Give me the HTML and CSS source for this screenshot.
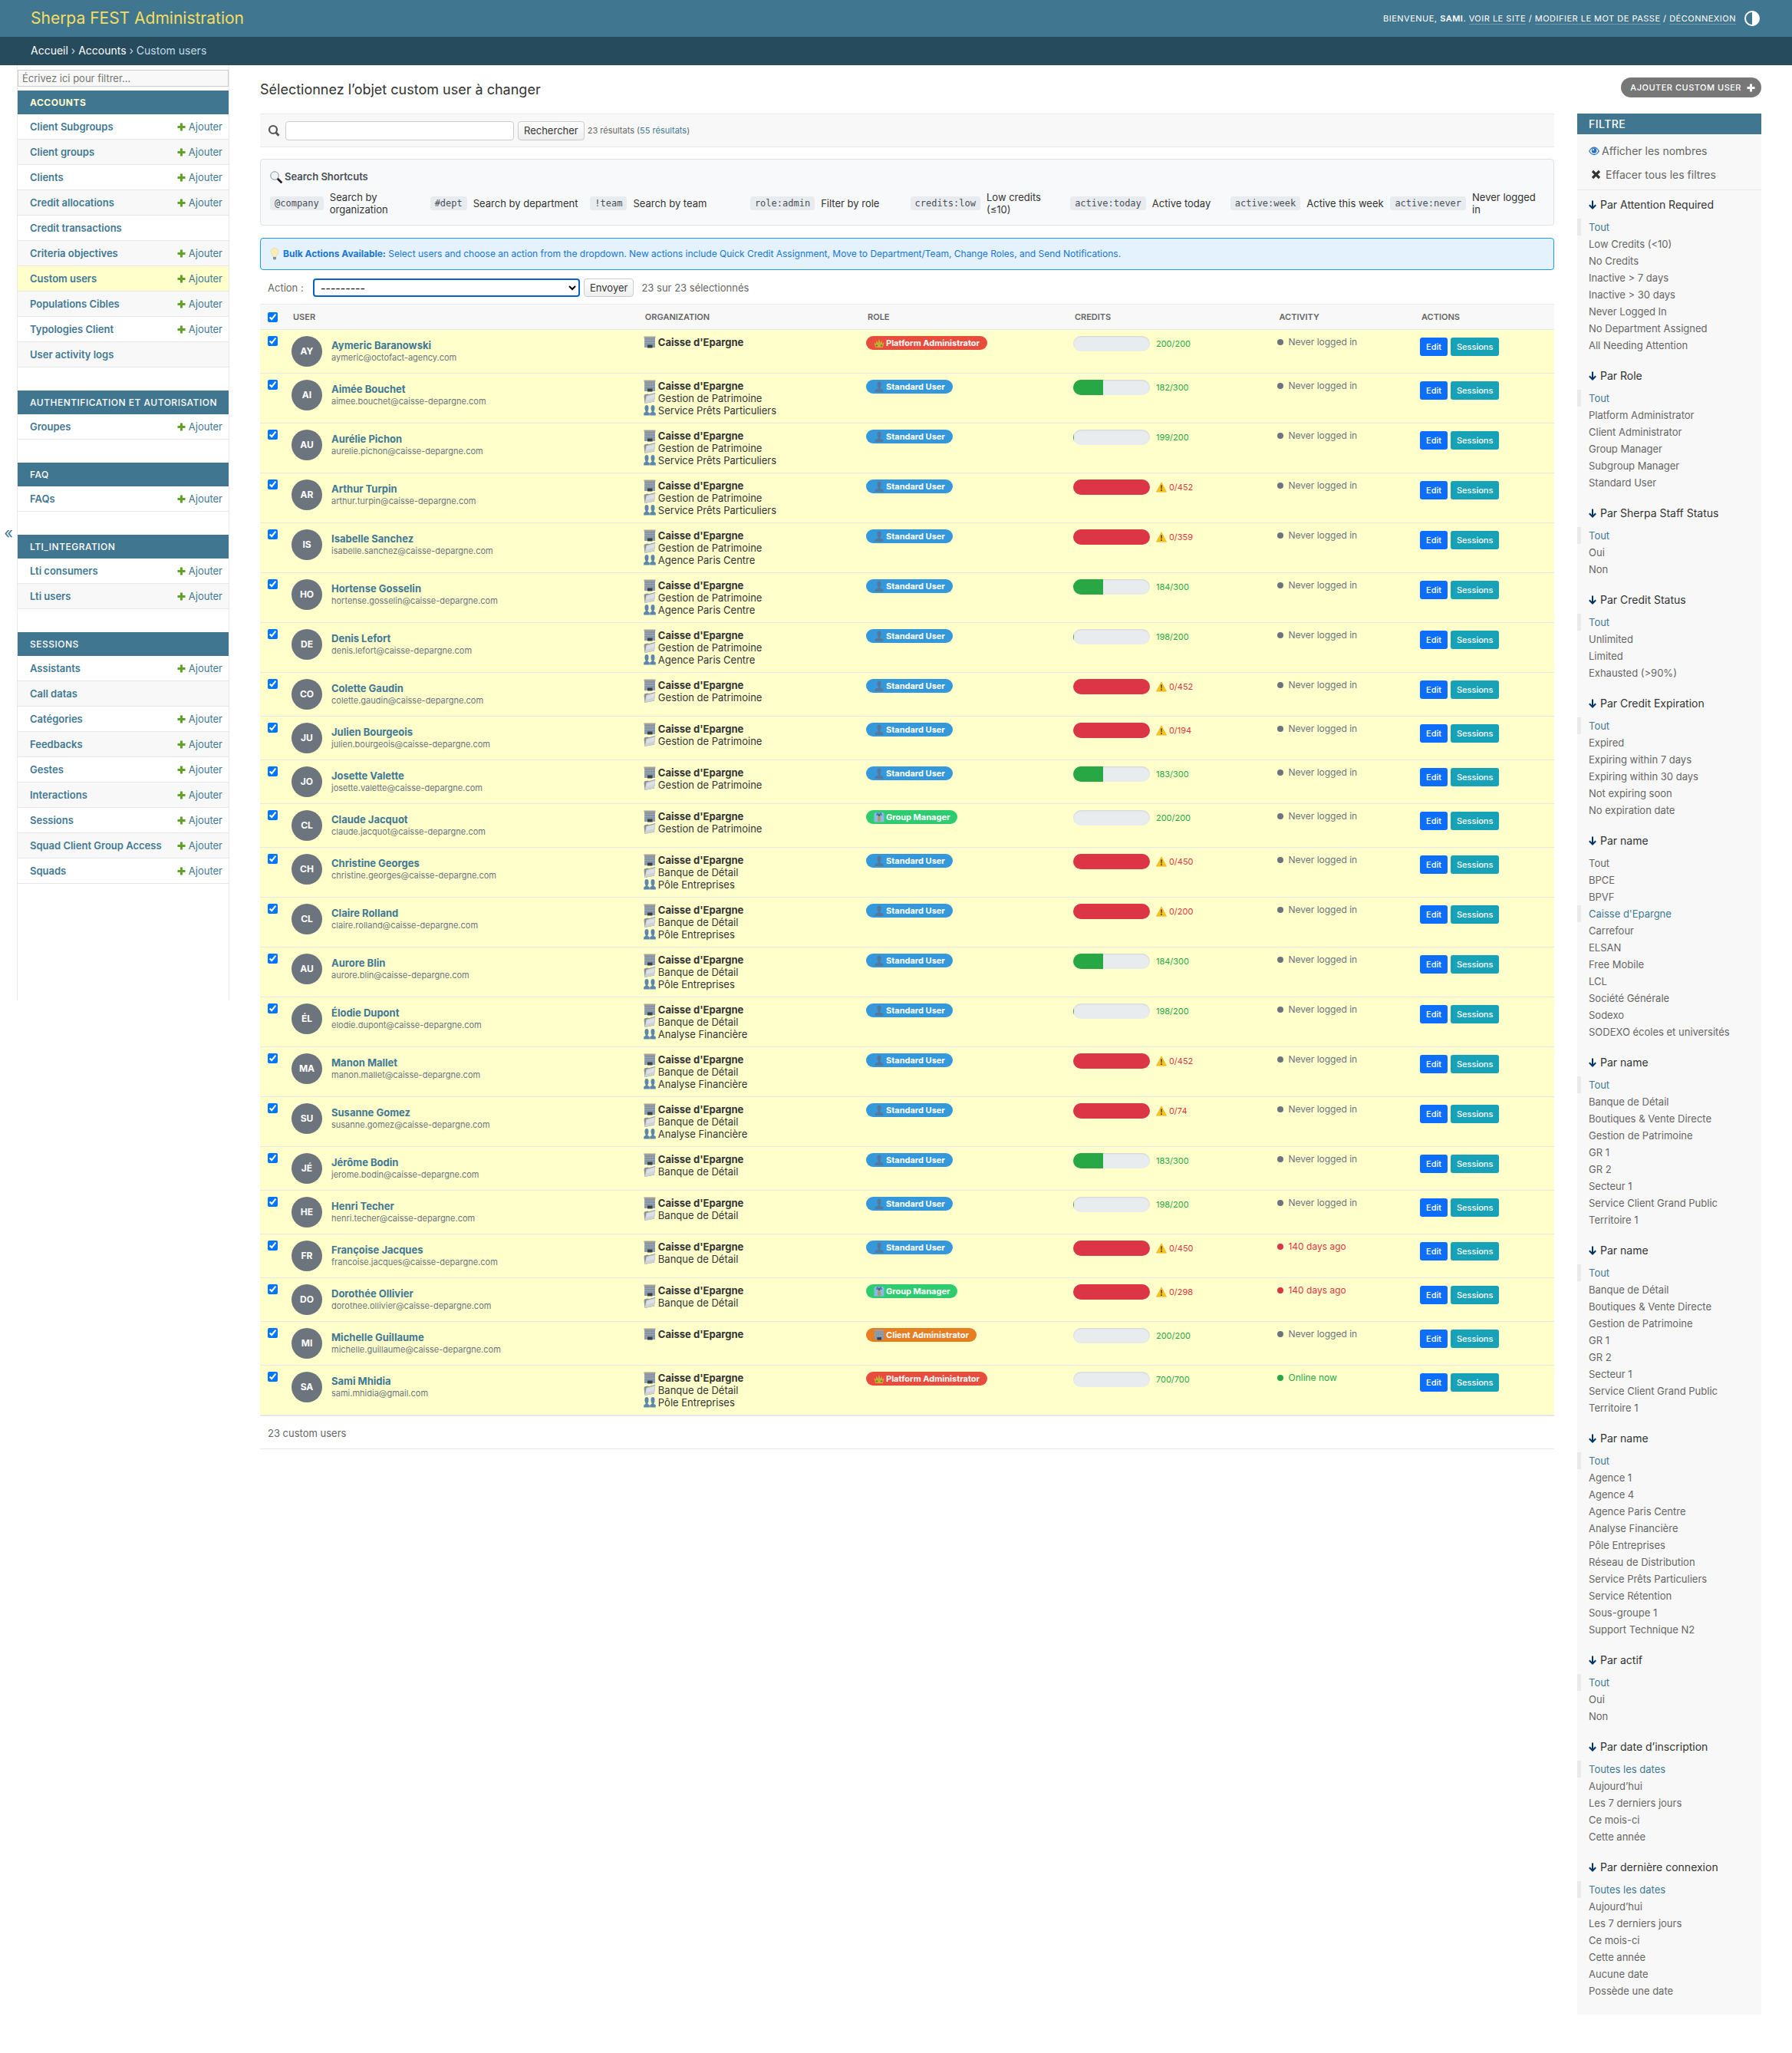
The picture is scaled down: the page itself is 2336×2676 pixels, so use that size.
FILE: index.html
```
<!DOCTYPE html>
<html lang="fr">
<head>
    <meta charset="UTF-8">
    <meta name="viewport" content="width=device-width, initial-scale=1.0">
    <title>Sélectionnez l’objet custom user à changer | Sherpa FEST Administration</title>
    <link rel="stylesheet" href="styles.css">
</head>
<body>
    <!-- Shared icons -->
    <svg class="sprite" width="0" height="0">
        <symbol id="i-plus" viewBox="0 0 13 13"><path d="M5 1.500h3V5h3.500v3H8v3.500H5V8H1.500V5H5z" fill="currentColor"/></symbol>
        <symbol id="i-down" viewBox="0 0 10 12"><path d="M5 0.500V10.500M0.800 6.300L5 10.500L9.200 6.300" fill="none" stroke="#036" stroke-width="2"/></symbol>
        <symbol id="i-building" viewBox="0 0 16 16">
            <path d="M1 1h14v14H1z" fill="#8d9ba8"/><path d="M0.500 0.500h15v2H0.500z" fill="#a89f98"/>
            <path d="M4 3.500v7M7 3.500v7M10 3.500v7M13 3.500v7" stroke="#7a8b9c" stroke-width="1.200"/>
            <path d="M1 5.500h14M1 8.500h14" stroke="#9eacb8" stroke-width="0.800"/>
            <path d="M5 11.500h6.500V15.500H5z" fill="#34424f"/>
        </symbol>
        <symbol id="i-folder" viewBox="0 0 16 16">
            <path d="M0.500 5L1.500 3.200L5.500 2.500L6.500 3.200L15 1L14 12.500L1.500 15z" fill="#8b9296"/>
            <path d="M3.500 5L15.500 1.800L13.800 12.200L1.500 15z" fill="#cfd3d6"/>
            <path d="M4.500 5.800L14.500 3L13.500 8L3.500 11z" fill="#dde0e2"/>
        </symbol>
        <symbol id="i-people" viewBox="0 0 16 16">
            <path d="M4 1C1.600 1 1.200 4 1.600 6.500C1.900 8 2.500 8.500 2.700 9.800L0.200 11.500V14.500H7.800V11.500L5.300 9.800C5.500 8.500 6.100 8 6.400 6.500C6.800 4 6.400 1 4 1z" fill="#5c87ab"/>
            <path d="M12 1C9.600 1 9.200 4 9.600 6.500C9.900 8 10.500 8.500 10.700 9.800L8.200 11.500V14.500H15.800V11.500L13.300 9.800C13.500 8.500 14.100 8 14.400 6.500C14.800 4 14.400 1 12 1z" fill="#5c87ab"/>
        </symbol>
        <symbol id="i-user" viewBox="0 0 14 14">
            <path d="M7 0.500C4.300 0.500 4 4 4.800 6.500L5.800 8.500V9.500L1.500 11.500V14H12.500V11.500L8.200 9.500V8.500L9.200 6.500C10 4 9.700 0.500 7 0.500z" fill="#56789a"/>
        </symbol>
        <symbol id="i-crown" viewBox="0 0 14 14">
            <path d="M0.500 6L3 8L3.500 3.500L5.500 7L7 1.500L8.500 7L10.500 3.500L11 8L13.500 6L12 13H2z" fill="#d9a62a"/>
            <path d="M7 4L8.500 8L7 11L5.500 8z" fill="#8fc13f"/><circle cx="3.800" cy="10.500" r="1.300" fill="#4f8a55"/><circle cx="10.200" cy="10.500" r="1.300" fill="#4f8a55"/>
        </symbol>
        <symbol id="i-tie" viewBox="0 0 14 14">
            <path d="M0.500 2L4.500 0.500L7 2L9.500 0.500L13.500 2V13.500H0.500z" fill="#8ab9e6"/>
            <path d="M4.500 0.500L7 3L9.500 0.500L11 4.500L8.800 5.500L7 3L5.200 5.500L3 4.500z" fill="#4a7fb5"/>
            <path d="M6 3h2l1.200 8.500L7 13.500L4.800 11.500z" fill="#a89a6a"/>
            <path d="M6.300 3h1.400v3H6.300z" fill="#33475c"/>
        </symbol>
        <symbol id="i-warn" viewBox="0 0 14 14">
            <path d="M7 0.800L13.600 13.200H0.400z" fill="#fcc21b" stroke="#e0a800" stroke-width="0.500" stroke-linejoin="round"/>
            <path d="M6.200 4.500h1.600L7.500 9.500h-1z" fill="#2b2b2b"/><circle cx="7" cy="11.200" r="0.900" fill="#2b2b2b"/>
        </symbol>
    </svg>

    <header class="header">
        <a class="branding" href="#">Sherpa FEST Administration</a>
        <div class="user-tools">
            <span>Bienvenue, <strong>Sami</strong>. <a href="#">Voir le site</a> / <a href="#">Modifier le mot de passe</a> / <a href="#">Déconnexion</a></span>
            <button class="theme-toggle" type="button" aria-label="Changer de thème">
                <svg width="20" height="20" viewBox="0 0 20 20"><circle cx="10" cy="10" r="9" fill="none" stroke="#fff" stroke-width="2"/><path d="M10 1a9 9 0 0 1 0 18z" fill="#fff"/></svg>
            </button>
        </div>
    </header>
    <nav class="breadcrumbs"><a href="#">Accueil</a> › <a href="#">Accounts</a> › Custom users</nav>

    <div class="main">
        <div class="nav-wrap">
            <button class="toggle-nav" type="button" aria-label="Masquer la navigation">«</button>
            <nav class="sidebar" id="sidebar">
                <input class="nav-filter" type="search" placeholder="Écrivez ici pour filtrer…" aria-label="Filtrer la navigation">
            </nav>
        </div>

        <main class="content">
            <div class="title-row">
                <h1>Sélectionnez l’objet custom user à changer</h1>
                <a class="add-link" href="#">Ajouter custom user <svg width="13" height="13"><use href="#i-plus"/></svg></a>
            </div>

            <div class="changelist">
                <div class="results">
                    <form class="toolbar">
                        <label for="searchbar" aria-label="Rechercher"><svg width="16" height="16" viewBox="0 0 16 16"><circle cx="7" cy="7" r="5" fill="none" stroke="#555" stroke-width="2.200"/><path d="M10.500 10.500L14.500 14.800" stroke="#555" stroke-width="2.800"/></svg></label>
                        <input id="searchbar" type="text">
                        <button class="btn" type="button">Rechercher</button>
                        <span class="small">23 résultats (<a href="#">55 résultats</a>)</span>
                    </form>

                    <section class="shortcuts">
                        <h2><svg width="16" height="16" viewBox="0 0 16 16"><path d="M10 10L14.500 14.500" stroke="#222" stroke-width="2.800" stroke-linecap="round"/><circle cx="6" cy="6" r="5.300" fill="#eef3f5" stroke="#8b9296"/></svg> Search Shortcuts</h2>
                        <div class="shortcut-grid">
                            <div><code>@company</code><span>Search by organization</span></div>
                            <div><code>#dept</code><span>Search by department</span></div>
                            <div><code>!team</code><span>Search by team</span></div>
                            <div><code>role:admin</code><span>Filter by role</span></div>
                            <div><code>credits:low</code><span>Low credits (≤10)</span></div>
                            <div><code>active:today</code><span>Active today</span></div>
                            <div><code>active:week</code><span>Active this week</span></div>
                            <div><code>active:never</code><span>Never logged in</span></div>
                        </div>
                    </section>

                    <div class="bulk-info">
                        <svg width="12" height="16" viewBox="0 0 12 16"><path d="M6 0.500C2.500 0.500 1 3 1 5.300C1 8 3.500 9 3.800 11.500H8.200C8.500 9 11 8 11 5.300C11 3 9.500 0.500 6 0.500z" fill="#fbeeb4" stroke="#e0d3a0" stroke-width="0.600"/><path d="M4 12h4v2.500L6.800 15.500H5.200L4 14.500z" fill="#8c9094"/></svg>
                        <span><strong>Bulk Actions Available:</strong> Select users and choose an action from the dropdown. New actions include Quick Credit Assignment, Move to Department/Team, Change Roles, and Send Notifications.</span>
                    </div>

                    <div class="actions">
                        <label for="action">Action :</label>
                        <select id="action"><option>---------</option></select>
                        <button class="btn" type="button">Envoyer</button>
                        <span class="counter">23 sur 23 sélectionnés</span>
                    </div>

                    <table class="result-list">
                        <thead>
                            <tr>
                                <th class="col-check"><input type="checkbox" checked aria-label="Tout sélectionner"></th>
                                <th class="col-user">User</th>
                                <th class="col-org">Organization</th>
                                <th class="col-role">Role</th>
                                <th class="col-credits">Credits</th>
                                <th class="col-activity">Activity</th>
                                <th class="col-actions">Actions</th>
                            </tr>
                        </thead>
                        <tbody id="users"></tbody>
                    </table>
                    <p class="paginator">23 custom users</p>
                </div>

                <aside class="filter" id="filter">
                    <h2>Filtre</h2>
                    <div class="filter-extra">
                        <a href="#"><svg width="14" height="12" viewBox="0 0 14 12"><path d="M0.700 6C3 2 5.500 1.200 7 1.200S11 2 13.300 6C11 10 8.500 10.500 7 10.500S3 10 0.700 6z" fill="#fff" stroke="#2b70bf" stroke-width="1.300"/><circle cx="7" cy="5.400" r="3.300" fill="#2b70bf"/><circle cx="6" cy="4.200" r="1" fill="#fff"/></svg> Afficher les nombres</a>
                        <a class="clear" href="#"><svg width="13" height="13" viewBox="0 0 13 13"><path d="M2 2L11 11M11 2L2 11" stroke="#333" stroke-width="3.200"/></svg> Effacer tous les filtres</a>
                    </div>
                </aside>
            </div>
        </main>
    </div>
    <script src="script.js"></script>
</body>
</html>
```

FILE: styles.css
```
* {
    box-sizing: border-box;
}
body {
    margin: 0;
    background: #fff;
    color: #333;
    font-family: Inter, Roboto, "Liberation Sans", sans-serif;
    font-size: 13px;
    line-height: 20px;
}
a {
    color: #417893;
    text-decoration: none;
}
button, input, select {
    font-family: inherit;
}
svg {
    flex: none;
}
.sprite {
    position: absolute;
}

/* Header */
.header {
    display: flex;
    justify-content: space-between;
    align-items: center;
    height: 48px;
    padding: 0 42px 0 40px;
    background: #417690;
    color: #fff;
}
.branding {
    color: #f5dd5d;
    font-size: 21px;
    font-weight: 400;
}
.user-tools {
    display: flex;
    align-items: center;
    gap: 11px;
    font-size: 11px;
    line-height: 14px;
    letter-spacing: 0.5px;
    text-transform: uppercase;
}
.user-tools strong {
    font-weight: 600;
}
.user-tools a {
    color: #fff;
    border-bottom: 1px solid rgba(255, 255, 255, 0.25);
}
.theme-toggle {
    display: flex;
    padding: 0;
    border: 0;
    background: none;
}
.breadcrumbs {
    padding: 8px 40px 9px;
    background: #264b5d;
    color: #c4dce8;
    font-size: 14px;
}
.breadcrumbs a {
    color: #fff;
}

/* Sidebar */
.main {
    display: flex;
    align-items: flex-start;
}
.nav-wrap {
    display: flex;
    flex: none;
}
.toggle-nav {
    width: 23px;
    padding: 0;
    border: 0;
    border-right: 1px solid #eaeaea;
    background: #fff;
    color: #417893;
    font-size: 20px;
}
.sidebar {
    width: 276px;
    padding: 6px 0 152px;
    border-right: 1px solid #eaeaea;
}
.nav-filter {
    display: block;
    width: 100%;
    height: 22px;
    margin-bottom: 5px;
    padding: 0 5px;
    border: 1px solid #ccc;
    background: #f8f8f8;
    font-size: 13px;
}
.nav-filter::placeholder {
    color: #757575;
}
.module + .module {
    margin-top: 30px;
}
.module h2 {
    margin: 0;
    padding: 8px 8px 7px 16px;
    background: #417690;
    color: #fff;
    font-size: 12px;
    line-height: 16px;
    font-weight: 500;
    letter-spacing: 0.5px;
    text-transform: uppercase;
}
.module.current h2 {
    color: #ffc;
    font-weight: 700;
}
.module ul, .filter ul {
    margin: 0;
    padding: 0;
    list-style: none;
}
.module li {
    display: flex;
    justify-content: space-between;
    padding: 6px 8px 6px 16px;
    border-bottom: 1px solid #e8e8e8;
    font-weight: 600;
}
.module li:nth-child(even) {
    background: #f8f8f8;
}
.module li.selected {
    background: #ffc;
}
.module .add {
    display: flex;
    align-items: center;
    gap: 3px;
    font-weight: 400;
}
.module .add svg {
    color: #5fa225;
}

/* Content */
.content {
    flex: 1;
    min-width: 0;
    padding: 16px 40px 50px;
}
.title-row {
    display: flex;
    justify-content: space-between;
    margin-bottom: 15px;
}
h1 {
    margin: 0;
    font-size: 18px;
    line-height: 32px;
    font-weight: 400;
}
.add-link {
    display: flex;
    align-items: center;
    gap: 6px;
    height: 26px;
    padding: 0 7px 0 12px;
    border-radius: 15px;
    background: #777;
    color: #fff;
    font-size: 11px;
    font-weight: 500;
    letter-spacing: 0.5px;
    text-transform: uppercase;
}
.changelist {
    display: flex;
    align-items: flex-start;
    gap: 30px;
}
.results {
    flex: 1;
    min-width: 0;
}
.toolbar {
    display: flex;
    align-items: center;
    height: 44px;
    margin-bottom: 15px;
    padding: 0 10px;
    border-top: 1px solid #eaeaea;
    border-bottom: 1px solid #eaeaea;
    background: #f8f8f8;
}
.toolbar label {
    display: flex;
    margin-right: 7px;
}
#searchbar {
    width: 298px;
    height: 25px;
    margin-right: 5px;
    border: 1px solid #ccc;
    border-radius: 4px;
}
.btn {
    height: 25px;
    padding: 0 7px;
    border: 1px solid #ccc;
    border-radius: 4px;
    background: linear-gradient(#fff, #eee);
    color: #333;
    font-size: 13px;
}
.small {
    margin-left: 4px;
    color: #666;
    font-size: 11px;
}
.shortcuts {
    margin-bottom: 16px;
    padding: 12px;
    border: 1px solid #dee2e6;
    border-radius: 4px;
    background: #f8f9fa;
    line-height: 16px;
}
.shortcuts h2 {
    display: flex;
    align-items: center;
    gap: 3px;
    margin: 0 0 8px;
    color: #495057;
    font-size: 13px;
    line-height: 21px;
    font-weight: 600;
}
.shortcut-grid {
    display: grid;
    grid-template-columns: repeat(auto-fit, minmax(200px, 1fr));
    gap: 8px;
}
.shortcut-grid div {
    display: flex;
    align-items: center;
    gap: 8px;
}
code {
    padding: 1px 6px;
    border-radius: 3px;
    background: #e9ecef;
    color: #495057;
    font-family: "DejaVu Sans Mono", monospace;
    font-size: 12px;
}
.bulk-info {
    display: flex;
    align-items: center;
    gap: 5px;
    margin-bottom: 11px;
    padding: 10px 12px;
    border: 1px solid #2196f3;
    border-radius: 4px;
    background: #e3f2fd;
    color: #1976d2;
    font-size: 12px;
}
.actions {
    display: flex;
    align-items: center;
    margin-bottom: 9px;
    padding-left: 10px;
    color: #666;
}
.actions label {
    width: 59px;
}
.actions select {
    width: 348px;
    height: 24px;
    margin-right: 5px;
    padding: 0 4px;
    border: 2px solid #0561cc;
    border-radius: 4px;
    background: #fff;
    font-size: 14px;
}
.actions .btn {
    height: 24px;
}
.counter {
    margin-left: 10px;
}

/* Result table */
.result-list {
    width: 100%;
    border-collapse: collapse;
    table-layout: fixed;
}
.result-list th {
    padding: 6px 10px;
    border-top: 1px solid #eaeaea;
    border-bottom: 1px solid #eaeaea;
    background: #f8f8f8;
    color: #666;
    font-size: 11px;
    font-weight: 600;
    text-align: left;
    text-transform: uppercase;
}
.result-list td {
    padding: 8px;
    border-bottom: 1px solid #e8e8e8;
    background: #ffc;
    font-size: 12px;
    line-height: 16px;
    vertical-align: top;
}
.result-list .col-check {
    width: 33px;
    padding-right: 0;
    padding-left: 10px;
}
.col-user {
    width: 27.2%;
}
.col-org {
    width: 17.2%;
}
.col-role {
    width: 16%;
}
.col-credits {
    width: 15.8%;
}
.col-activity {
    width: 11%;
}
.col-check input {
    display: block;
    width: 13px;
    height: 13px;
    margin: 0;
    accent-color: #0075ff;
}
.user {
    display: flex;
    align-items: center;
    gap: 12px;
}
.avatar {
    width: 40px;
    border-radius: 50%;
    background: #6c757d;
    color: #fff;
    font-weight: 700;
    line-height: 40px;
    text-align: center;
}
.user a {
    display: block;
    font-size: 13px;
    font-weight: 700;
}
.user small {
    display: block;
    color: #6c757d;
    font-size: 11px;
}
.org {
    display: flex;
    align-items: center;
    gap: 3px;
    font-size: 13px;
}
.org:first-child {
    font-weight: 700;
}
.badge {
    display: inline-flex;
    align-items: center;
    gap: 2px;
    height: 18px;
    padding: 0 10px;
    border-radius: 12px;
    color: #fff;
    font-size: 11px;
    font-weight: 700;
    vertical-align: top;
}
.badge.platform {
    background: #e74c3c;
}
.badge.client {
    background: #e67e22;
}
.badge.group {
    background: #2ecc71;
}
.badge.standard {
    background: #3498db;
}
.credits {
    display: flex;
    align-items: center;
    gap: 8px;
    color: #28a745;
    font-size: 11px;
}
.credits.empty {
    color: #dc3545;
}
.credits > span {
    display: flex;
    align-items: center;
    gap: 3px;
}
.bar {
    width: 100px;
    height: 20px;
    overflow: hidden;
    border-radius: 10px;
    background: #e9ecef;
    box-shadow: inset 0 1px 2px rgba(0, 0, 0, 0.1);
}
.bar div {
    height: 100%;
    background: #28a745;
}
.empty .bar div {
    background: #dc3545;
}
.activity {
    display: flex;
    align-items: center;
    gap: 6px;
    color: #6c757d;
}
.activity::before {
    content: "";
    width: 8px;
    height: 8px;
    border-radius: 50%;
    background: currentColor;
}
.activity.late {
    color: #dc3545;
}
.activity.online {
    color: #28a745;
}
.row-actions {
    display: flex;
    gap: 4px;
    padding-top: 2px;
}
.row-actions a {
    padding: 4px 8px;
    border-radius: 3px;
    background: #0d6efd;
    color: #fff;
    font-size: 11px;
    font-weight: 500;
}
.row-actions a + a {
    background: #17a2b8;
}
.paginator {
    margin: 0;
    padding: 12px 10px 10px;
    border-top: 1px solid #e8e8e8;
    border-bottom: 1px solid #eaeaea;
    color: #666;
}

/* Filter column */
.filter {
    flex: 0 0 240px;
    padding-bottom: 10px;
    background: #f8f8f8;
}
.filter h2 {
    margin: 0;
    padding: 4px 15px 3px;
    background: #417690;
    color: #fff;
    font-size: 14px;
    font-weight: 500;
    letter-spacing: 0.5px;
    text-transform: uppercase;
}
.filter-extra {
    padding: 6px 15px 4px;
    border-bottom: 1px solid #eaeaea;
}
.filter a {
    color: #666;
}
.filter-extra a {
    display: flex;
    align-items: center;
    gap: 3px;
    font-size: 14px;
    line-height: 31px;
}
.filter-extra .clear {
    gap: 6px;
    padding-left: 3px;
}
.filter section {
    padding: 10px 0;
}
.filter h3 {
    display: flex;
    align-items: center;
    gap: 5px;
    margin: 0 0 9px;
    padding: 0 15px;
    font-size: 14px;
    line-height: 18px;
    font-weight: 400;
}
.filter li {
    padding-left: 15px;
    line-height: 22px;
}
.filter li.selected {
    padding-left: 10px;
    border-left: 5px solid #eaeaea;
}
.filter li.selected a {
    color: #417893;
}
```

FILE: script.js
```
const icon = (name, size) => `<svg width="${size}" height="${size}"><use href="#i-${name}"/></svg>`;

// A trailing "-" marks a model that cannot be added from the menu
const apps = [
    ['Accounts', ['Client Subgroups', 'Client groups', 'Clients', 'Credit allocations', 'Credit transactions-', 'Criteria objectives', 'Custom users', 'Populations Cibles', 'Typologies Client', 'User activity logs-']],
    ['Authentification et autorisation', ['Groupes']],
    ['FAQ', ['FAQs']],
    ['LTI_Integration', ['Lti consumers', 'Lti users']],
    ['Sessions', ['Assistants', 'Call datas-', 'Catégories', 'Feedbacks', 'Gestes', 'Interactions', 'Sessions', 'Squad Client Group Access', 'Squads']]
];

document.getElementById('sidebar').insertAdjacentHTML('beforeend', apps.map(([app, models], i) => `
    <div class="module${i === 0 ? ' current' : ''}">
        <h2>${app}</h2>
        <ul>${models.map(model => `
            <li${model === 'Custom users' ? ' class="selected"' : ''}>
                <a href="#">${model.replace(/-$/, '')}</a>
                ${model.endsWith('-') ? '' : `<a class="add" href="#">${icon('plus', 13)} Ajouter</a>`}
            </li>`).join('')}
        </ul>
    </div>`).join(''));

const roles = {
    platform: ['crown', 'Platform Administrator'],
    client: ['building', 'Client Administrator'],
    group: ['tie', 'Group Manager'],
    standard: ['user', 'Standard User']
};
const gp = 'Gestion de Patrimoine';
const bd = 'Banque de Détail';
const cd = '@caisse-depargne.com';

// name, email, group, subgroup, role, credits left, credits total, last activity
const users = [
    ['Aymeric Baranowski', 'aymeric@octofact-agency.com', '', '', 'platform', 200, 200],
    ['Aimée Bouchet', 'aimee.bouchet' + cd, gp, 'Service Prêts Particuliers', 'standard', 182, 300],
    ['Aurélie Pichon', 'aurelie.pichon' + cd, gp, 'Service Prêts Particuliers', 'standard', 199, 200],
    ['Arthur Turpin', 'arthur.turpin' + cd, gp, 'Service Prêts Particuliers', 'standard', 0, 452],
    ['Isabelle Sanchez', 'isabelle.sanchez' + cd, gp, 'Agence Paris Centre', 'standard', 0, 359],
    ['Hortense Gosselin', 'hortense.gosselin' + cd, gp, 'Agence Paris Centre', 'standard', 184, 300],
    ['Denis Lefort', 'denis.lefort' + cd, gp, 'Agence Paris Centre', 'standard', 198, 200],
    ['Colette Gaudin', 'colette.gaudin' + cd, gp, '', 'standard', 0, 452],
    ['Julien Bourgeois', 'julien.bourgeois' + cd, gp, '', 'standard', 0, 194],
    ['Josette Valette', 'josette.valette' + cd, gp, '', 'standard', 183, 300],
    ['Claude Jacquot', 'claude.jacquot' + cd, gp, '', 'group', 200, 200],
    ['Christine Georges', 'christine.georges' + cd, bd, 'Pôle Entreprises', 'standard', 0, 450],
    ['Claire Rolland', 'claire.rolland' + cd, bd, 'Pôle Entreprises', 'standard', 0, 200],
    ['Aurore Blin', 'aurore.blin' + cd, bd, 'Pôle Entreprises', 'standard', 184, 300],
    ['Élodie Dupont', 'elodie.dupont' + cd, bd, 'Analyse Financière', 'standard', 198, 200],
    ['Manon Mallet', 'manon.mallet' + cd, bd, 'Analyse Financière', 'standard', 0, 452],
    ['Susanne Gomez', 'susanne.gomez' + cd, bd, 'Analyse Financière', 'standard', 0, 74],
    ['Jérôme Bodin', 'jerome.bodin' + cd, bd, '', 'standard', 183, 300],
    ['Henri Techer', 'henri.techer' + cd, bd, '', 'standard', 198, 200],
    ['Françoise Jacques', 'francoise.jacques' + cd, bd, '', 'standard', 0, 450, '140 days ago'],
    ['Dorothée Ollivier', 'dorothee.ollivier' + cd, bd, '', 'group', 0, 298, '140 days ago'],
    ['Michelle Guillaume', 'michelle.guillaume' + cd, '', '', 'client', 200, 200],
    ['Sami Mhidia', 'sami.mhidia@gmail.com', bd, 'Pôle Entreprises', 'platform', 700, 700, 'Online now']
];

document.getElementById('users').innerHTML = users.map(([name, email, group, subgroup, role, left, total, last = 'Never logged in']) => {
    const state = last.endsWith('ago') ? 'late' : last === 'Online now' ? 'online' : '';
    return `
    <tr>
        <td class="col-check"><input type="checkbox" checked aria-label="${name}"></td>
        <td><div class="user"><span class="avatar">${name.slice(0, 2).toUpperCase()}</span><div><a href="#">${name}</a><small>${email}</small></div></div></td>
        <td>
            <div class="org">${icon('building', 16)}Caisse d'Epargne</div>
            ${group && `<div class="org">${icon('folder', 16)}${group}</div>`}
            ${subgroup && `<div class="org">${icon('people', 16)}${subgroup}</div>`}
        </td>
        <td><span class="badge ${role}">${icon(roles[role][0], 14)}${roles[role][1]}</span></td>
        <td><div class="credits${left ? '' : ' empty'}"><div class="bar"><div style="width: ${Math.round((1 - left / total) * 100)}%"></div></div><span>${left ? '' : icon('warn', 14)}${left}/${total}</span></div></td>
        <td><div class="activity ${state}">${last}</div></td>
        <td><div class="row-actions"><a href="#">Edit</a><a href="#">Sessions</a></div></td>
    </tr>`;
}).join('');

const groups = ['Tout', bd, 'Boutiques & Vente Directe', gp, 'GR 1', 'GR 2', 'Secteur 1', 'Service Client Grand Public', 'Territoire 1'];
const dates = ['Toutes les dates', 'Aujourd’hui', 'Les 7 derniers jours', 'Ce mois-ci', 'Cette année'];

// title, choices, selected index
const filters = [
    ['Attention Required', ['Tout', 'Low Credits (<10)', 'No Credits', 'Inactive > 7 days', 'Inactive > 30 days', 'Never Logged In', 'No Department Assigned', 'All Needing Attention']],
    ['Role', ['Tout', 'Platform Administrator', 'Client Administrator', 'Group Manager', 'Subgroup Manager', 'Standard User']],
    ['Sherpa Staff Status', ['Tout', 'Oui', 'Non']],
    ['Credit Status', ['Tout', 'Unlimited', 'Limited', 'Exhausted (>90%)']],
    ['Credit Expiration', ['Tout', 'Expired', 'Expiring within 7 days', 'Expiring within 30 days', 'Not expiring soon', 'No expiration date']],
    ['name', ['Tout', 'BPCE', 'BPVF', "Caisse d'Epargne", 'Carrefour', 'ELSAN', 'Free Mobile', 'LCL', 'Société Générale', 'Sodexo', 'SODEXO écoles et universités'], 3],
    ['name', groups],
    ['name', groups],
    ['name', ['Tout', 'Agence 1', 'Agence 4', 'Agence Paris Centre', 'Analyse Financière', 'Pôle Entreprises', 'Réseau de Distribution', 'Service Prêts Particuliers', 'Service Rétention', 'Sous-groupe 1', 'Support Technique N2']],
    ['actif', ['Tout', 'Oui', 'Non']],
    ['date d’inscription', dates],
    ['dernière connexion', [...dates, 'Aucune date', 'Possède une date']]
];
const escape = text => text.replace(/&/g, '&amp;').replace(/</g, '&lt;');

document.getElementById('filter').insertAdjacentHTML('beforeend', filters.map(([title, choices, selected = 0]) => `
    <section>
        <h3><svg width="10" height="12"><use href="#i-down"/></svg> Par ${title}</h3>
        <ul>${choices.map((choice, i) => `<li${i === selected ? ' class="selected"' : ''}><a href="#">${escape(choice)}</a></li>`).join('')}</ul>
    </section>`).join(''));
```
